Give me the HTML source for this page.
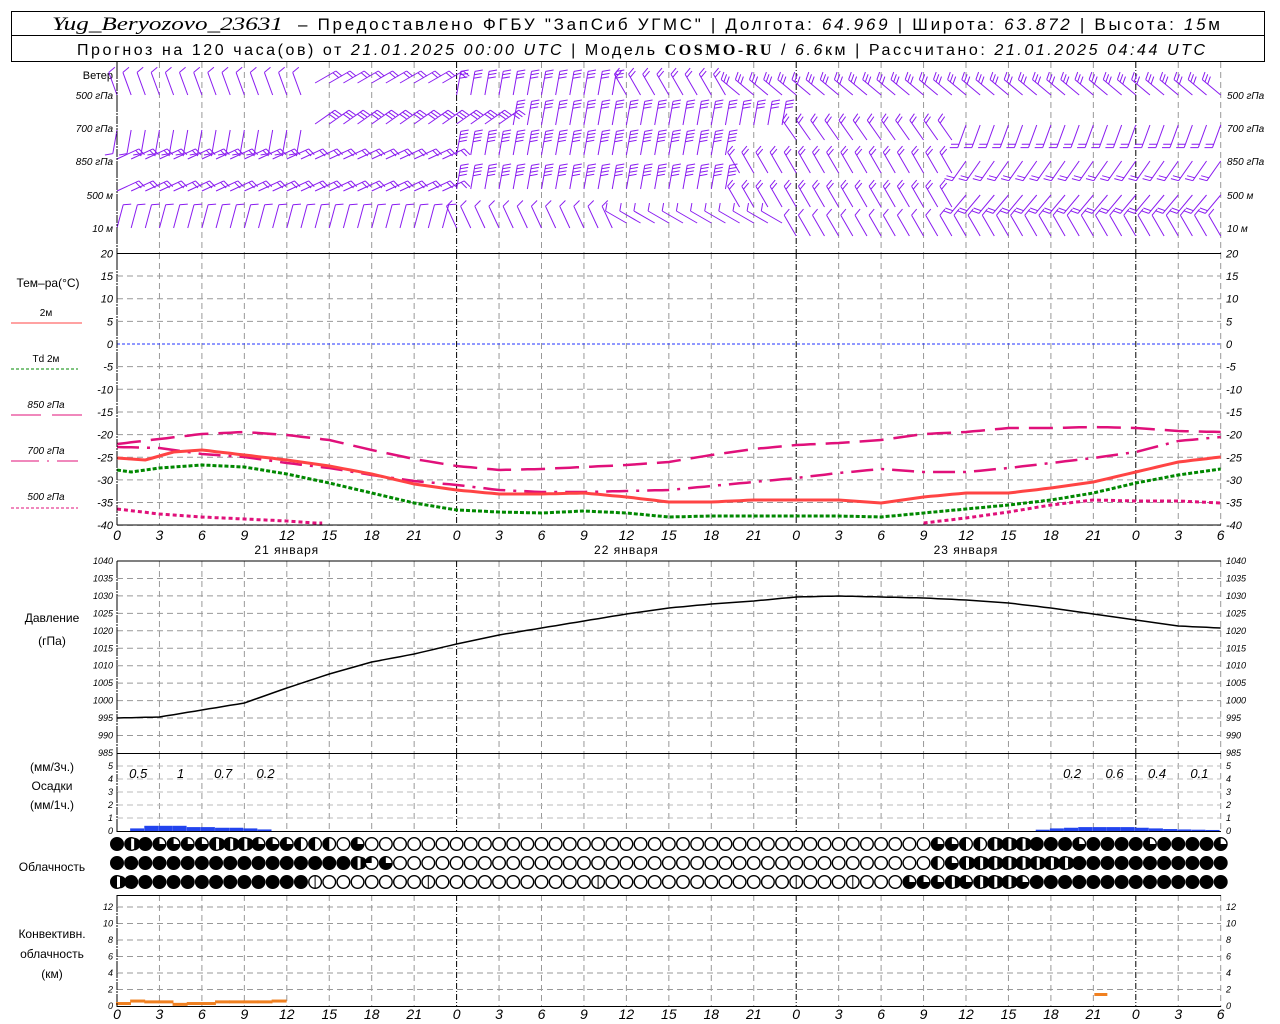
<!DOCTYPE html>
<html><head><meta charset="utf-8"><style>
body{margin:0;background:#fff;width:1280px;height:1024px;overflow:hidden}
svg{display:block}
text{font-family:"Liberation Sans",sans-serif}
</style></head><body>
<svg id="s" width="1280" height="1024" xmlns="http://www.w3.org/2000/svg">
<rect x="11.5" y="11.5" width="1253" height="50" fill="#fff" stroke="#000"/>
<line x1="11" y1="35.5" x2="1265" y2="35.5" stroke="#000"/>
<text x="52" y="30" font-size="19" font-style="italic" textLength="231" lengthAdjust="spacingAndGlyphs" style="font-family:'Liberation Serif',serif">Yug_Beryozovo_23631</text>
<text x="298" y="30" font-size="17" textLength="922" lengthAdjust="spacing">– Предоставлено ФГБУ "ЗапСиб УГМС" | Долгота: <tspan font-style="italic">64.969</tspan> | Широта: <tspan font-style="italic">63.872</tspan> | Высота: <tspan font-style="italic">15</tspan>м</text>
<text x="77" y="55" font-size="16" textLength="1128" lengthAdjust="spacing">Прогноз на 120 часа(ов) от <tspan font-style="italic">21.01.2025 00:00 UTC</tspan>  | Модель <tspan font-weight="bold" style="font-family:'Liberation Serif',serif">COSMO-RU</tspan> / <tspan font-style="italic">6.6</tspan>км | Рассчитано: <tspan font-style="italic">21.01.2025 04:44 UTC</tspan></text>
<g id="g"></g>
</svg>
<script>
const NS="http://www.w3.org/2000/svg",G=document.getElementById('g');
function el(t,a,txt){const e=document.createElementNS(NS,t);for(const k in a)e.setAttribute(k,a[k]);if(txt!=null)e.textContent=txt;G.appendChild(e);return e}
const X=h=>117+h*14.15,X0=117,X1=1221;
function interp(pts,h){for(let i=0;i<pts.length-1;i++){if(h>=pts[i][0]&&h<=pts[i+1][0]){const t=(h-pts[i][0])/(pts[i+1][0]-pts[i][0]);return pts[i][1]+t*(pts[i+1][1]-pts[i][1])}}return pts[pts.length-1][1]}
function curve(pts,st,h0=0,h1=78){let d='';for(let h=h0;h<=h1;h+=0.5){d+=(d?'L':'M')+X(h).toFixed(1)+' '+interp(pts,h).toFixed(1)}el('path',Object.assign({d:d,fill:'none'},st))}
const panels=[[62,253],[253,525],[561,753],[753,832],[895,1007]];
for(const [a,b] of panels){
 for(let h=0;h<=78;h+=3){const day=h%24==0;el('line',{x1:X(h),y1:a,x2:X(h),y2:b,stroke:day?'#000':'#999','stroke-dasharray':day?'6,2,1,2':'6,4'})}
}
el('line',{x1:X0,y1:253.5,x2:X1,y2:253.5,stroke:'#000'});
el('text',{x:113,y:79,'font-size':11,'text-anchor':'end'},'Ветер');
const wr=[[95,'500 гПа'],[128,'700 гПа'],[161,'850 гПа'],[195,'500 м'],[228,'10  м']];
wr.forEach(r=>{el('text',{x:113,y:r[0]+4,'font-size':10,'font-style':'italic','text-anchor':'end'},r[1]);el('text',{x:1227,y:r[0]+4,'font-size':10,'font-style':'italic'},r[1])});
function barb(x,y,ang,n,col){const L=24,rad=ang*Math.PI/180;const dx=Math.sin(rad),dy=-Math.cos(rad);const x2=x+dx*L,y2=y+dy*L;let d=`M${x} ${y}L${x2.toFixed(1)} ${y2.toFixed(1)}`;
 const fr=(ang+70)*Math.PI/180;const fx=Math.sin(fr),fy=-Math.cos(fr);
 for(let i=0;i<n;i++){const px=x2-dx*i*3.5,py=y2-dy*i*3.5;d+=`M${px.toFixed(1)} ${py.toFixed(1)}l${(fx*8).toFixed(1)} ${(fy*8).toFixed(1)}`}
 el('path',{d:d,stroke:col,fill:'none','stroke-width':1})}
const col='#8a1cf0';
function rowAngles(h,r){
 if(r==0){if(h<14)return[-20,1,0];if(h<24)return[60,2,-12];if(h<36)return[10,3,0];if(h<44)return[-30,2,0];return[-50,3,0]}
 if(r==1){if(h<14)return[190,1,2];if(h<28)return[55,3,-4];if(h<48)return[10,3,-3];if(h<60)return[-35,2,12];return[200,2,-3]}
 if(r==2){if(h<24)return[65,2,-2];if(h<44)return[10,4,-6];if(h<60)return[-30,2,12];return[215,2,0]}
 if(r==3){if(h<24)return[65,2,-4];if(h<44)return[10,4,-6];if(h<60)return[-30,2,12];return[220,2,0]}
 if(r==4){if(h<24)return[15,1,0];if(h<36)return[-25,1,0];if(h<48)return[-60,1,-5];return[-30,1,8]}}
for(let r=0;r<5;r++)for(let h=0;h<=78;h++){const a=rowAngles(h,r);barb(X(h),wr[r][0]+a[2],a[0],a[1],col)}
const TY=t=>344-t*4.53;
for(let t=20;t>=-40;t-=5){const y=TY(t);if(t!=20&&t!=0)el('line',{x1:X0,y1:y,x2:X1,y2:y,stroke:'#999','stroke-dasharray':'6,4'});
 el('text',{x:113,y:y+4,'font-size':11,'font-style':'italic','text-anchor':'end'},t);el('text',{x:1226,y:y+4,'font-size':11,'font-style':'italic'},t)}
el('line',{x1:X0,y1:TY(0),x2:X1,y2:TY(0),stroke:'#23f','stroke-dasharray':'3,2'});
el('line',{x1:X0,y1:525,x2:X1,y2:525,stroke:'#000'});
el('text',{x:48,y:287,'font-size':12,'text-anchor':'middle'},'Тем–ра(°C)');
el('text',{x:46,y:316,'font-size':10,'text-anchor':'middle'},'2м');el('line',{x1:11,y1:323,x2:82,y2:323,stroke:'#f44'});
el('text',{x:46,y:362,'font-size':10,'text-anchor':'middle'},'Td  2м');el('line',{x1:11,y1:369,x2:78,y2:369,stroke:'#080','stroke-dasharray':'3,2'});
el('text',{x:46,y:408,'font-size':10,'text-anchor':'middle','font-style':'italic'},'850 гПа');el('line',{x1:11,y1:415,x2:82,y2:415,stroke:'#e0107a','stroke-dasharray':'30,11'});
el('text',{x:46,y:454,'font-size':10,'text-anchor':'middle','font-style':'italic'},'700 гПа');el('line',{x1:11,y1:461,x2:78,y2:461,stroke:'#e0107a','stroke-dasharray':'28,8,2,8'});
el('text',{x:46,y:500,'font-size':10,'text-anchor':'middle','font-style':'italic'},'500 гПа');el('line',{x1:11,y1:508,x2:78,y2:508,stroke:'#e0107a','stroke-dasharray':'3,2'});
const T2=[[0,458],[2,460],[4,452],[6,450],[9,455],[12,460],[15,466],[18,474],[21,484],[24,490],[27,494],[30,494],[33,493],[36,497],[39,502],[42,502],[45,500],[48,500],[51,500],[54,503],[57,497],[60,493],[63,493],[66,488],[69,482],[72,472],[75,462],[78,457]];
const TD=[[0,470],[1,472],[3,468],[6,465],[9,467],[12,474],[15,483],[18,493],[21,503],[24,510],[27,512],[30,513],[33,511],[36,513],[39,517],[42,516],[48,516],[51,516],[54,517],[57,513],[60,509],[63,505],[66,500],[69,493],[72,483],[75,475],[78,469]];
const T85=[[0,447],[3,448],[6,454],[9,457],[12,463],[15,468],[18,475],[21,481],[24,485],[27,490],[30,492],[33,492],[36,491],[39,490],[42,486],[45,482],[48,478],[51,473],[54,469],[57,472],[60,472],[63,468],[66,463],[69,458],[72,452],[75,441],[78,437]];
const T70=[[0,444],[3,439],[6,434],[9,432],[12,435],[15,440],[18,450],[21,459],[24,466],[27,470],[30,469],[33,467],[36,465],[39,462],[42,455],[45,449],[48,445],[51,443],[54,440],[57,434],[60,432],[63,428],[66,428],[69,427],[72,428],[75,431],[78,432]];
const T50=[[0,509],[3,514],[6,517],[9,519],[12,521],[14,523],[57,523],[60,518],[63,512],[66,505],[69,500],[72,501],[75,501],[78,503]];
curve(TD,{stroke:'#080','stroke-width':3,'stroke-dasharray':'4,2'});
curve(T70,{stroke:'#e0107a','stroke-width':2.5,'stroke-dasharray':'24,10'});
curve(T85,{stroke:'#e0107a','stroke-width':2.5,'stroke-dasharray':'22,8,3,8'});
curve(T50,{stroke:'#e0107a','stroke-width':3,'stroke-dasharray':'4,3'},0,14.5);
curve(T50,{stroke:'#e0107a','stroke-width':3,'stroke-dasharray':'4,3'},57,78);
curve(T2,{stroke:'#f44','stroke-width':3});
for(let h=0;h<=78;h+=3){el('text',{x:X(h),y:540,'font-size':14,'font-style':'italic','text-anchor':'middle'},h%24);el('text',{x:X(h),y:1019,'font-size':14,'font-style':'italic','text-anchor':'middle'},h%24)}
el('text',{x:X(12),y:554,'font-size':12,'text-anchor':'middle','letter-spacing':'1'},'21 января');
el('text',{x:X(36),y:554,'font-size':12,'text-anchor':'middle','letter-spacing':'1'},'22 января');
el('text',{x:X(60),y:554,'font-size':12,'text-anchor':'middle','letter-spacing':'1'},'23 января');
const PY=p=>561+(1040-p)*3.49;
el('line',{x1:X0,y1:561,x2:X1,y2:561,stroke:'#000'});
for(let p=1040;p>=985;p-=5){const y=PY(p);if(p<1040&&p>985)el('line',{x1:X0,y1:y,x2:X1,y2:y,stroke:'#999','stroke-dasharray':'6,4'});
 el('text',{x:113,y:y+3,'font-size':9,'font-style':'italic','text-anchor':'end'},p);el('text',{x:1226,y:y+3,'font-size':9,'font-style':'italic'},p)}
el('text',{x:52,y:622,'font-size':12,'text-anchor':'middle'},'Давление');
el('text',{x:52,y:645,'font-size':12,'text-anchor':'middle'},'(гПа)');
const P=[[0,718],[3,717],[6,710],[9,703],[12,688],[15,674],[18,662],[21,654],[24,644],[27,635],[30,628],[33,621],[36,614],[39,608],[42,604],[45,601],[48,597],[51,596],[54,597],[57,598],[60,600],[63,603],[66,608],[69,614],[72,620],[75,626],[78,628]];
curve(P,{stroke:'#000','stroke-width':1.5});
el('line',{x1:X0,y1:753.5,x2:X1,y2:753.5,stroke:'#000'});
for(let v=0;v<=5;v++){const y=831-v*13;if(v>0)el('line',{x1:X0,y1:y,x2:X1,y2:y,stroke:'#bbb','stroke-dasharray':'6,4'});
 el('text',{x:113,y:y+3,'font-size':9,'font-style':'italic','text-anchor':'end'},v);el('text',{x:1226,y:y+3,'font-size':9,'font-style':'italic'},v)}
el('line',{x1:X0,y1:831.5,x2:X1,y2:831.5,stroke:'#000'});
el('text',{x:52,y:771,'font-size':12,'text-anchor':'middle'},'(мм/3ч.)');
el('text',{x:52,y:790,'font-size':12,'text-anchor':'middle'},'Осадки');
el('text',{x:52,y:809,'font-size':12,'text-anchor':'middle'},'(мм/1ч.)');
[[1.5,'0.5'],[4.5,'1'],[7.5,'0.7'],[10.5,'0.2'],[67.5,'0.2'],[70.5,'0.6'],[73.5,'0.4'],[76.5,'0.1']].forEach(a=>el('text',{x:X(a[0]),y:778,'font-size':13,'font-style':'italic','text-anchor':'middle'},a[1]));
const pr={1:.2,2:.4,3:.4,4:.4,5:.3,6:.3,7:.25,8:.25,9:.2,10:.12,65:.1,66:.2,67:.25,68:.3,69:.3,70:.3,71:.3,72:.25,73:.2,74:.15,75:.12,76:.1,77:.08};
for(const h in pr){const v=pr[h];el('rect',{x:X(+h)-1,y:831-v*13,width:14,height:v*13,fill:'#2244ee'})}
el('text',{x:52,y:871,'font-size':12,'text-anchor':'middle'},'Облачность');
function cloud(cx,cy,type){const r=6.3;
 el('circle',{cx:cx,cy:cy,r:r,fill:type=='F'?'#000':'#fff',stroke:'#000','stroke-width':1.4});
 if(type=='H'){el('path',{d:`M${cx} ${cy-r}A${r} ${r} 0 0 0 ${cx} ${cy+r}Z`,fill:'#000'});el('path',{d:`M${cx+3} ${cy-r}A${r} ${r} 0 0 1 ${cx+3} ${cy+r}Z`,fill:'#000'})}
 if(type=='Q'){el('path',{d:`M${cx} ${cy}L${cx} ${cy-r}A${r} ${r} 0 1 0 ${cx+r} ${cy}Z`,fill:'#000'})}
 if(type=='q'){el('path',{d:`M${cx} ${cy}L${cx} ${cy-r}A${r} ${r} 0 0 0 ${cx-r} ${cy}Z`,fill:'#000'})}
 if(type=='V'){el('line',{x1:cx,y1:cy-r,x2:cx,y2:cy+r,stroke:'#000'})}
 if(type=='h'){el('path',{d:`M${cx} ${cy-r}A${r} ${r} 0 0 0 ${cx} ${cy+r}Z`,fill:'#000'})}
}
const r1='FHFQQQQHHHQQQhhhOQ'+'O'.repeat(40)+'QQhhHHHFFFQFFFFQFFFFQ';
const r2='F'.repeat(17)+'HqQ'+'O'.repeat(38)+'hQHHHHHHHHFFFFFFFFFFF';
const r3='H'+'F'.repeat(13)+'V'+'O'.repeat(7)+'V'+'O'.repeat(11)+'VOOOOOOOOOOOOOVOOO'+'VOOOQQQHQHHHQ'+'F'.repeat(15);
[r1,r2,r3].forEach((r,i)=>{for(let h=0;h<=78;h++){cloud(X(h),844+i*19,r[h]||'F')}});
el('line',{x1:X0,y1:895.5,x2:X1,y2:895.5,stroke:'#000'});
for(let v=0;v<=12;v+=2){const y=1006-v*8.25;if(v>0)el('line',{x1:X0,y1:y,x2:X1,y2:y,stroke:'#999','stroke-dasharray':'6,4'});
 el('text',{x:113,y:y+3,'font-size':9,'font-style':'italic','text-anchor':'end'},v);el('text',{x:1226,y:y+3,'font-size':9,'font-style':'italic'},v)}
el('line',{x1:X0,y1:1006.5,x2:X1,y2:1006.5,stroke:'#000'});
el('text',{x:52,y:938,'font-size':12,'text-anchor':'middle'},'Конвективн.');
el('text',{x:52,y:958,'font-size':12,'text-anchor':'middle'},'облачность');
el('text',{x:52,y:978,'font-size':12,'text-anchor':'middle'},'(км)');
const cv=[.3,.6,.5,.5,.2,.3,.3,.5,.5,.5,.5,.6];
cv.forEach((v,h)=>el('rect',{x:X(h)-1,y:1006-v*8.25-1.5,width:15,height:3,fill:'#f08020'}));
el('rect',{x:X(69)+1,y:993,width:13,height:3,fill:'#f08020'});
[[62,253],[253,525],[561,753],[753,832],[895,1007]].forEach(p=>{el('line',{x1:X0,y1:p[0],x2:X0,y2:p[1],stroke:'#000','stroke-dasharray':'2,1'})});
</script>
</body></html>
